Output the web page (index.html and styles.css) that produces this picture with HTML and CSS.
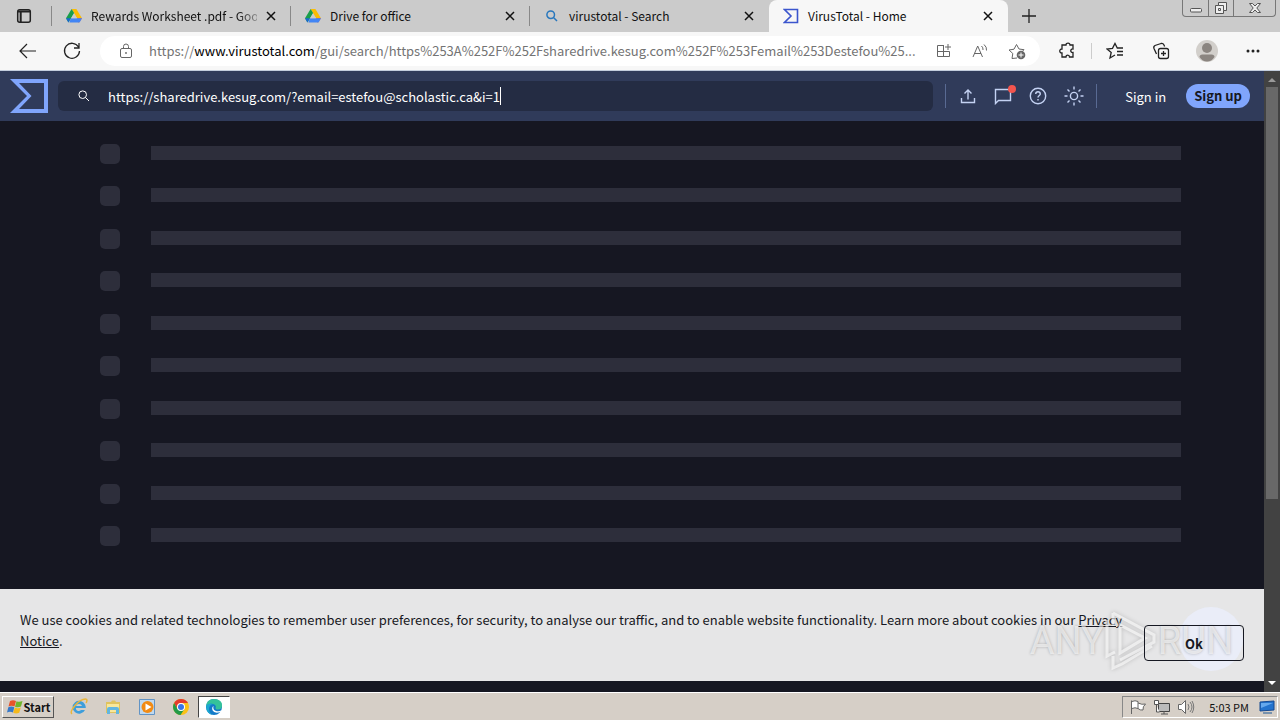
FILE: index.html
```html
<!DOCTYPE html>
<html lang="en">
<head>
<meta charset="utf-8">
<title>VirusTotal - Home</title>
<link rel="stylesheet" href="styles.css">
</head>
<body>
<svg class="defs" aria-hidden="true">
  <symbol id="drive" viewBox="0 0 16 16"><path fill="#fbbc04" d="M5.6 1h4.8L16 10.3h-4.8z"/><path fill="#ea4335" d="M16 10.3h-4.8l1 4.2c.8 0 1.2-.4 1.5-.9z"/><path fill="#4285f4" d="M4.8 10.3H16l-2.3 3.9c-.2.2-.6.3-1 .3H3.400z"/><path fill="#1a9e4b" d="M5.600 1 0 10.300l2.400 4.100 5.700-9.500z"/><path fill="#1967d2" d="m0 10.300 2.400 4.200 2.400-4.200z"/><path fill="#ccc" d="m8 5.600 2.800 4.700H5.200z"/></symbol>
  <symbol id="close" viewBox="0 0 10 10"><path d="m1 1 8 8M9 1 1 9" fill="none" stroke="currentColor" stroke-width="1.500"/></symbol>
  <symbol id="sigma" viewBox="0 0 38 34"><path fill="currentColor" fill-rule="evenodd" d="M0 0h38v34H0l17-17zM9 4l12.500 13L9 30h25V4z"/></symbol>
  <symbol id="lens" viewBox="0 0 12 12"><path d="M7.500 7.500 11 11M8.500 4.700a3.800 3.800 0 1 1-7.600 0 3.800 3.800 0 0 1 7.600 0z" fill="none" stroke="currentColor" stroke-width="var(--lens-stroke, 1)"/></symbol>
</svg>

<header class="tabbar">
  <button class="tab-menu" aria-label="Tab actions"><svg width="16" height="16" viewBox="0 0 16 16"><rect x="1.700" y="1.700" width="12.600" height="12.600" rx="2" fill="none" stroke="#222" stroke-width="1.500"/><path d="M2 3.500h12M4.700 4v10" stroke="#222" stroke-width="2"/></svg></button>
  <nav class="tabs" aria-label="Open tabs">
    <div class="tab"><svg class="favicon"><use href="#drive"/></svg><span class="tab-title tab-title-fade">Rewards Worksheet .pdf - Goog</span><button class="tab-close" aria-label="Close tab"><svg><use href="#close"/></svg></button></div>
    <div class="tab"><svg class="favicon"><use href="#drive"/></svg><span class="tab-title">Drive for office</span><button class="tab-close" aria-label="Close tab"><svg><use href="#close"/></svg></button></div>
    <div class="tab"><svg class="favicon favicon-search" viewBox="-2 -2 16 16"><use href="#lens" width="12" height="12"/></svg><span class="tab-title">virustotal - Search</span><button class="tab-close" aria-label="Close tab"><svg><use href="#close"/></svg></button></div>
    <div class="tab tab-active"><svg class="favicon favicon-vt" viewBox="0 0 16 16"><path fill="none" stroke="currentColor" stroke-width="1.600" d="M1.500 1.500h13v13h-13L8 8z"/></svg><span class="tab-title">VirusTotal - Home</span><button class="tab-close" aria-label="Close tab"><svg><use href="#close"/></svg></button></div>
  </nav>
  <button class="new-tab" aria-label="New tab"><svg width="14" height="14" viewBox="0 0 14 14"><path d="M7 0v14M0 7h14" stroke="#222" stroke-width="1.300"/></svg></button>
  <div class="window-controls">
    <button aria-label="Minimize"><svg width="14" height="14" viewBox="0 0 14 14"><rect x="1.500" y="7.500" width="11" height="3.500" rx="1" fill="#eee" stroke="#555"/></svg></button>
    <button aria-label="Restore"><svg width="14" height="14" viewBox="0 0 14 14"><path d="M4.500 1.500h8v8h-3v3h-8v-8h3z" fill="#eee" stroke="#555"/><path d="M4.500 4.500h5v5M4.500 7.500h2v2h-2z" fill="none" stroke="#555"/></svg></button>
    <button class="window-close" aria-label="Close"><svg width="14" height="14" viewBox="0 0 14 14"><path d="M1.500 2.500h3L7 5l2.500-2.500h3L8.800 7l3.700 4.500h-3L7 9l-2.500 2.500h-3L5.200 7z" fill="#eee" stroke="#555"/></svg></button>
  </div>
</header>

<div class="toolbar">
  <button class="nav-button" aria-label="Back"><svg width="18" height="16" viewBox="0 0 18 16"><path d="M17 8H1.500M8 1 1 8l7 7" fill="none" stroke="#222" stroke-width="1.200"/></svg></button>
  <button class="nav-button" aria-label="Refresh"><svg width="18" height="18" viewBox="0 0 18 18"><path d="M15.500 5A7.500 7.500 0 1 0 16.500 9M16 1v5h-5" fill="none" stroke="#222" stroke-width="1.300"/></svg></button>
  <div class="address">
    <svg class="lock" viewBox="0 0 14 16"><rect x="1.500" y="5.500" width="11" height="9" rx="1.500"/><path d="M4.500 5.500V3.500a2.500 2.500 0 0 1 5 0v2"/><circle cx="7" cy="10" r=".6"/></svg>
    <div class="url" role="textbox" contenteditable="true" spellcheck="false" aria-label="Address">https://<b>www.virustotal.com</b>/gui/search/https%253A%252F%252Fsharedrive.kesug.com%252F%253Femail%253Destefou%25...</div>
    <div class="address-actions">
      <button aria-label="Apps"><svg width="16" height="16" viewBox="0 0 16 16"><path d="M7.500 2.500h-6v11h12v-5h-12M7.500 2v11.500M12 1v6M9 4h6"/></svg></button>
      <button aria-label="Read aloud"><svg width="16" height="16" viewBox="0 0 16 16"><path d="M1 14 5.700 3 10.500 14M2.500 10.500h6.500M9.500 3q1.800 1.500 1.500 4M12 1.500q3 2.500 2.500 6"/></svg></button>
      <button aria-label="Add to favorites"><svg width="18" height="17" viewBox="0 0 18 17"><path d="M9 15 4 15.500l.8-5L1 7l5-.8L8.500 1.500 11 6l5 .7-2 2"/><circle cx="13" cy="12" r="4.300" fill="#666" stroke="none"/><path d="M13 9.500v5M10.500 12h5" stroke="#fff"/></svg></button>
    </div>
  </div>
  <div class="toolbar-actions">
    <button aria-label="Extensions"><svg width="18" height="18" viewBox="0 0 18 18"><path d="M5 3h3c0-2.500 4-2.500 4 0h3v4c-3-.5-3 4 0 3.500v4.500h-3.500c0-2.500-3.500-2.500-3.500 0H4v-4c-3 .3-3-4.200 0-4V3z"/></svg></button>
    <span class="toolbar-rule"></span>
    <button aria-label="Favorites"><svg width="18" height="18" viewBox="0 0 18 18"><path d="M9 13l-5 3 1.200-5.500L1 7l5.500-.6L9 1.500 11.300 6H17M11 9.500h6M11 13h6"/></svg></button>
    <button aria-label="Collections"><svg width="18" height="18" viewBox="0 0 18 18"><rect x="6.500" y="6.500" width="10" height="10" rx="2"/><path d="M11.500 9v5M9 11.500h5M4.500 12 2 6.500Q1.200 4.500 3 3.500l6-2q2-.5 3 1.500l.6 1.500"/></svg></button>
    <button aria-label="Profile"><svg width="22" height="22" viewBox="0 0 22 22"><circle cx="11" cy="11" r="11" fill="#d2cfcb" stroke="none"/><circle cx="11" cy="8" r="5" fill="#8b8580" stroke="none"/><path d="M3.500 17q0-2.500 3-2.500h9q3 0 3 2.500-3 4.500-7.500 4.500T3.500 17" fill="#8b8580" stroke="none"/></svg></button>
    <button aria-label="Settings and more"><svg width="14" height="4" viewBox="0 0 14 4"><g fill="#222" stroke="none"><circle cx="2" cy="2" r="1.500"/><circle cx="7" cy="2" r="1.500"/><circle cx="12" cy="2" r="1.500"/></g></svg></button>
  </div>
</div>

<div class="viewport">
  <div class="page">
    <div class="vt-header">
      <a class="vt-logo" href="#" aria-label="VirusTotal"><svg width="38" height="34"><use href="#sigma"/></svg></a>
      <label class="vt-search">
        <svg width="12" height="12"><use href="#lens"/></svg>
        <input type="text" aria-label="Search" spellcheck="false" value="https://sharedrive.kesug.com/?email=estefou@scholastic.ca&amp;i=1"><span class="caret"></span>
      </label>
      <div class="vt-tools">
        <button aria-label="Upload"><svg width="16" height="16" viewBox="0 0 16 16"><path d="M1.500 10v4.500h13V10M8 11.500V2M4.500 5.500 8 2l3.500 3.500"/></svg></button>
        <button class="notify" aria-label="Messages"><svg width="18" height="18" viewBox="0 0 18 18"><path d="M1.500 16.500v-14h15v11h-12z"/></svg><span class="notify-dot"></span></button>
        <button aria-label="Help"><svg width="18" height="18" viewBox="0 0 18 18"><circle cx="9" cy="9" r="7.700"/><path d="M6.700 7Q6.800 4.800 9 4.800T11.300 7C11.300 8.500 9 8.500 9 10.500M9 12v1.500"/></svg></button>
        <button aria-label="Theme"><svg width="20" height="20" viewBox="0 0 20 20"><circle cx="10" cy="10" r="3.600"/><path d="M10 .5v3M10 16.500v3M.5 10h3M16.500 10h3M3.500 3.500l2 2M14.500 14.500l2 2M3.500 16.500l2-2M14.500 5.500l2-2"/></svg></button>
      </div>
      <a class="sign-in" href="#">Sign in</a>
      <a class="sign-up" href="#">Sign up</a>
    </div>

    <main class="skeleton" aria-busy="true">
      <div class="skeleton-row"><i></i><b></b></div>
      <div class="skeleton-row"><i></i><b></b></div>
      <div class="skeleton-row"><i></i><b></b></div>
      <div class="skeleton-row"><i></i><b></b></div>
      <div class="skeleton-row"><i></i><b></b></div>
      <div class="skeleton-row"><i></i><b></b></div>
      <div class="skeleton-row"><i></i><b></b></div>
      <div class="skeleton-row"><i></i><b></b></div>
      <div class="skeleton-row"><i></i><b></b></div>
      <div class="skeleton-row"><i></i><b></b></div>
    </main>

    <section class="cookies">
      <p>We use cookies and related technologies to remember user preferences, for security, to analyse our traffic, and to enable website functionality. Learn more about cookies in our <a href="#">Privacy Notice</a>.</p>
      <button>Ok</button>
    </section>
  </div>
  <div class="scrollbar">
    <svg width="16" height="16" viewBox="0 0 16 16"><path d="m4 11 4-4 4 4z" fill="#999"/></svg>
    <div class="track"><div class="thumb"></div></div>
    <svg width="16" height="16" viewBox="0 0 16 16"><path d="m4 5 4 4 4-4z" fill="#fff"/></svg>
  </div>
  <div class="pointer-halo"></div>
  <div class="watermark"><span>ANY</span><svg width="54" height="62" viewBox="0 0 54 62"><path d="M9 3v13M3 10v36l8-4M9 46v12l9-4 30-18M9 3l41 22v7L16 50M16 15v28l25-15z"/></svg><span>RUN</span></div>
</div>

<footer class="taskbar">
  <button class="start"><svg width="17" height="16" viewBox="0 0 17 16"><path fill="#e8532a" d="M4 2q3-1.500 6 0L8.500 7.500q-3-1.500-6 0z"/><path fill="#70b52c" d="M10.500 2.300q3 1.200 6-.3L15 7.500q-3 1.500-6 .2z"/><path fill="#3778c8" d="M2.300 8.200q3-1.300 6 0L7 13.500q-3-1.500-6 0z"/><path fill="#f5b91c" d="M8.800 8.500q3 1.300 6 0l-1.600 5.300q-3 1.300-6 0z"/></svg>Start</button>
  <div class="launchers">
    <button aria-label="Internet Explorer"><svg width="18" height="18" viewBox="0 0 18 18"><path fill-rule="evenodd" d="M15 6.500A6.500 6.500 0 1 0 15 12h-4q-1.500 1.500-3.500.8Q5.800 12 6 10h9.800q0-2-.8-3.500zM6 8q.5-2 3-2t3 2z" fill="#3d9edb"/><path d="M2 16Q-.5 14 5 7.500T15.500 1q2.500 0 .7 4" fill="none" stroke="#e9b63a" stroke-width="1.500"/></svg></button>
    <button aria-label="File Explorer"><svg width="18" height="18" viewBox="0 0 18 18"><path d="M2 4h5l1-1.500h3L12 4h4v11H2z" fill="#dfc35f"/><path d="M3 6h12v8H3z" fill="#f8e79a"/><path d="M3 16v-5q0-2 2-2h8q2 0 2 2v5h-3v-4H6v4z" fill="#62b6e0"/></svg></button>
    <button aria-label="Media Player"><svg width="18" height="18" viewBox="0 0 18 18"><path d="M1.500 1.500h15v15h-15z" fill="#c0d9ef" stroke="#6294c5"/><circle cx="9.500" cy="9" r="6" fill="#f28b14"/><path d="m7.500 5.500 6 3.500-6 3.500z" fill="#fff"/></svg></button>
    <button aria-label="Chrome"><svg width="18" height="18" viewBox="0 0 18 18"><circle cx="9" cy="9" r="8" fill="#fbc116"/><path fill="#e33b2e" d="M2.100 5A8 8 0 0 1 16 5H9a4 4 0 0 0-3.500 6z"/><path fill="#229a48" d="M2.100 5A8 8 0 0 0 8.500 17l4-6H5.500z"/><circle cx="9" cy="9" r="4" fill="#fff"/><circle cx="9" cy="9" r="3" fill="#3875e8"/></svg></button>
    <button class="running" aria-label="Edge"><svg width="18" height="18" viewBox="0 0 18 18"><circle cx="9" cy="9" r="8" fill="#137ac8"/><path fill="#34c29a" d="M1.200 8Q2 1 9 1q8 0 8 6.500 0 4-4 4-3 0-2.300-2Q11.500 7 8 6 4 5 1.200 8z"/><path fill="#1ca8d0" d="M1.200 8Q4 4.500 8 6 4 7 4 11q0 4 4 6-7-1-6.800-9z"/><path fill="#fff" d="M8.500 8q-1 4 2.500 5 3 .8 5.500-.7 0 1.500-1.500 2-6 1.500-7.500-2-1-3 1-4.300z"/></svg></button>
  </div>
  <div class="tray">
    <svg width="18" height="16" viewBox="0 0 18 16"><path d="M2.500 15V1.500M3 2.500q3-1.500 6 0v7q-3-1.500-6 0M9 4q4 2 7.500 1-3 2.500-2.500 6-3 .5-5-1.500" fill="#fff" stroke="#666"/></svg>
    <svg width="18" height="16" viewBox="0 0 18 16"><path d="M5.500 4.500h11v8h-11z" fill="#bbb" stroke="#444"/><path d="M8 15h7M11 12v3M1.500 1.500h4v4h-4zM3.500 6v7h3" fill="#fff" stroke="#555"/></svg>
    <svg width="18" height="16" viewBox="0 0 18 16"><path d="M1.500 5.500h3l4-4v13l-4-4h-3z" fill="#fff" stroke="#666"/><path d="M11 5q2 3 0 6M13 3q4 5 0 10M15 2q3.500 6 0 12" fill="none" stroke="#777"/></svg>
    <time>5:03 PM</time>
    <svg width="16" height="16" viewBox="0 0 16 16"><path d="M1 3 15 2v9l-14 1z" fill="#2473cd" stroke="#174a91"/><path d="M2 4h12L2 9z" fill="#65a8ed"/><path d="M4 14h9" stroke="#7892ad" stroke-width="2"/></svg>
  </div>
</footer>
</body>
</html>
```
FILE: styles.css
```css
* { box-sizing: border-box; }
body {
  margin: 0;
  height: 100vh;
  display: flex;
  flex-direction: column;
  overflow: hidden;
  font: 12px "Noto Sans CJK SC", "Noto Sans", sans-serif;
  color: #111;
}
button {
  font: inherit;
  color: inherit;
  border: 0;
  padding: 0;
  background: none;
  display: flex;
  align-items: center;
  justify-content: center;
}
svg { display: block; flex: none; }
.defs { position: absolute; width: 0; height: 0; }

/* Tab strip */
.tabbar { height: 32px; flex: none; display: flex; background: #cbcbcb; }
.tab-menu { width: 52px; padding-right: 4px; border-right: 1px solid #888; margin: 6px 0; height: 20px; }
.tabs { display: flex; flex: 0 1 956px; min-width: 0; }
.tab { flex: 1 1 0; min-width: 0; display: flex; align-items: center; gap: 9px; padding: 0 15px 0 14px; position: relative; }
.tab:not(.tab-active)::after { content: ""; position: absolute; right: 0; top: 6px; height: 20px; border-right: 1px solid #888; }
.tab:nth-child(3)::after { display: none; }
.tab-active { background: #f7f7f7; border-radius: 8px 8px 0 0; }
.favicon { width: 16px; height: 16px; }
.favicon-search { color: #2877bd; --lens-stroke: 1.5; }
.favicon-vt { color: #3b55cd; }
.tab-title { flex: 1; min-width: 0; white-space: nowrap; padding-bottom: 2px; }
.tab-title-fade { mask-image: linear-gradient(to right, #000 88%, transparent 105%); mask-clip: no-clip; }
.tab-close svg { width: 10px; height: 10px; }
.new-tab { width: 42px; }
.window-controls { display: flex; margin: 0 4px 0 auto; height: 17px; border: 1px solid #777; border-top: 0; border-radius: 0 0 4px 4px; }
.window-controls button { width: 25px; }
.window-controls button + button { border-left: 1px solid #777; }
.window-controls .window-close { width: 42px; }

/* Address row */
.toolbar { height: 39px; flex: none; display: flex; align-items: center; padding: 0 4px 0 6px; background: #f7f7f7; border-bottom: 1px solid #c3cddd; }
.nav-button { width: 44px; height: 32px; }
.address { flex: 1; min-width: 0; height: 30px; margin-left: 6px; display: flex; align-items: center; background: #fff; border-radius: 15px; padding: 0 14px 0 19px; }
.lock { width: 14px; height: 16px; margin-right: 16px; fill: none; stroke: #666; }
.url { flex: 1; min-width: 0; white-space: nowrap; font-size: 13px; line-height: 20px; color: #737373; outline: 0; }
.url b { font-weight: 400; color: #000; }
.address-actions { display: flex; gap: 20px; padding-left: 12px; }
.address-actions svg { fill: none; stroke: #666; }
.toolbar-actions { display: flex; align-items: center; padding-left: 3px; }
.toolbar-actions button { width: 46px; height: 32px; }
.toolbar-actions button:first-child { width: 48px; }
.toolbar-actions svg { fill: none; stroke: #222; stroke-width: 1.3; }
.toolbar-rule { height: 16px; border-left: 1px solid #ccc; }

/* Browser viewport */
.viewport { flex: 1; min-height: 0; display: flex; position: relative; }
.page { flex: 1; min-width: 0; display: flex; flex-direction: column; background: #161722; font-size: 13px; }
.scrollbar { width: 16px; display: flex; flex-direction: column; background: #424242; }
.track { flex: 1; padding: 0 2px; }
.thumb { height: 70%; background: #686868; }

.vt-header { height: 50px; flex: none; display: flex; align-items: center; padding: 0 14px 0 10px; background: #303b5a; color: #fff; }
.vt-logo { color: #80a5fc; margin-right: 10px; }
.vt-search { flex: 1; min-width: 0; height: 30px; display: flex; align-items: center; padding-left: 20px; background: #242c43; border-radius: 6px; }
.vt-search svg { margin-right: 18px; }
.vt-search input { field-sizing: content; border: 0; padding: 0; outline: 0; background: none; font: inherit; color: #fff; min-width: 0; }
.caret { width: 1px; height: 18px; background: #fff; }
.vt-tools { display: flex; align-items: center; justify-content: space-between; width: 152px; height: 24px; margin-left: 12px; padding: 0 12px 0 14px; border: 0 solid #596a93; border-width: 0 1px; }
.vt-tools svg { fill: none; stroke: #c4d2f3; stroke-width: 1.4; }
.notify { position: relative; }
.notify-dot { position: absolute; right: -4px; top: -2px; width: 8px; height: 8px; border-radius: 50%; background: #f3554e; }
.sign-in { color: #fff; text-decoration: none; margin: 0 20px 0 28px; }
.sign-up { height: 24px; line-height: 24px; padding: 0 8px; border-radius: 12px; background: #80a5fc; color: #161822; text-decoration: none; font-weight: 700; }

.skeleton { display: grid; grid-template-rows: repeat(10, 1fr); height: 425px; margin: 12px 83px 0 100px; }
.skeleton-row { display: flex; align-items: center; gap: 31px; padding-bottom: 1px; }
.skeleton-row i { width: 20px; height: 20px; border-radius: 5px; background: #2d2e3b; }
.skeleton-row b { flex: 1; height: 14px; margin-bottom: 2px; background: #2d2e3b; }

.cookies { margin: auto 0 11px; display: flex; gap: 20px; align-items: flex-start; padding: 20px; background: #e6e6e7; color: #161822; line-height: 21px; }
.cookies p { flex: 1; margin: 0 0 10px; }
.cookies a { color: inherit; }
.cookies button { position: relative; z-index: 2; width: 100px; height: 36px; margin-top: 16px; border: 1px solid #161822; border-radius: 4px; font-weight: 700; }

/* Pointer highlight and overlay mark */
.pointer-halo { position: absolute; right: 37px; bottom: 21px; width: 64px; height: 64px; border-radius: 50%; background: rgba(235, 240, 255, .7); }
.watermark { position: absolute; right: 47px; bottom: 20px; display: flex; align-items: center; color: rgba(255, 255, 255, .6); font: 38px/62px "Roboto", sans-serif; text-shadow: 0 0 3px rgba(0, 0, 0, .25); pointer-events: none; }
.watermark svg { fill: none; stroke: rgba(255, 255, 255, .6); stroke-width: 3; filter: drop-shadow(0 0 2px rgba(0, 0, 0, .3)); }

/* Taskbar */
.taskbar { height: 28px; flex: none; display: flex; align-items: center; padding: 2px; background: #d6cfc7; border-top: 1px solid #fff; font-size: 11px; }
.start { height: 22px; width: 52px; gap: 1px; border: 1px solid; border-color: #fff #555 #555 #fff; font-weight: 700; }
.launchers { display: flex; margin-left: 8px; }
.launchers button { width: 34px; height: 22px; }
.launchers .running { width: 32px; background: #fff; border: 1px solid; border-color: #444 #fff #fff #444; }
.tray { margin-left: auto; height: 22px; display: flex; align-items: center; gap: 6px; padding: 0 2px 0 6px; border: 1px solid; border-color: #888 #fff #fff #888; }
.tray time { margin: 0 4px 0 8px; }
```
